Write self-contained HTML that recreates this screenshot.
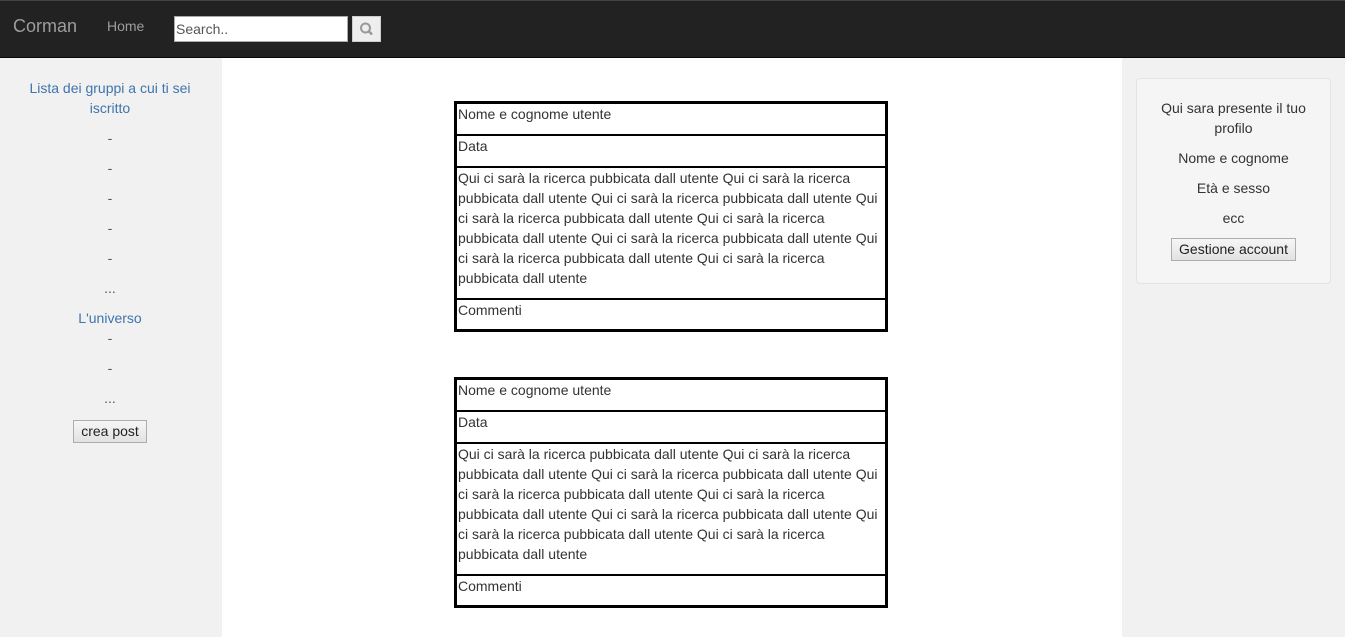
<!DOCTYPE html>
<html><head><meta charset="utf-8"><style>
*{box-sizing:border-box;margin:0;padding:0}
body{width:1345px;height:637px;overflow:hidden;font-family:"Liberation Sans",Arial,sans-serif;font-size:14px;color:#333;background:#fff;position:relative}
.nav{position:absolute;left:0;top:0;width:1345px;height:58px;background:#222;border-bottom:1px solid #080808;border-top:1px solid #444}
.brand{position:absolute;left:13px;top:15px;font-size:18px;color:#9d9d9d}
.home{position:absolute;left:107px;top:17px;color:#9d9d9d;font-size:14px}
.search{position:absolute;left:174px;top:15px;width:174px;height:26px;background:#fff;border:1px solid #aaa;font-size:14px;color:#555;padding:4px 1px}
.sbtn{position:absolute;left:352px;top:15px;width:29px;height:26px;background:#eee;border:1px solid #ccc}
.left{position:absolute;left:0;top:58px;width:222px;height:579px;background:#f1f1f1;text-align:center}
.right{position:absolute;left:1122px;top:58px;width:223px;height:579px;background:#f1f1f1}
.l{position:absolute;left:0;width:220px;text-align:center;line-height:20px;color:#555}
.blue{color:#3f74ad}
.btn{display:inline-block;border:1px solid #adadad;background:linear-gradient(#f6f6f6,#e2e2e2);font-size:14px;color:#222;padding:2px 7px;line-height:17px}
.card{position:absolute;left:1136px;top:78px;width:195px;height:206px;background:#f5f5f5;border:1px solid #e3e3e3;border-radius:4px}
.r{position:absolute;left:0;width:193px;text-align:center;line-height:20px}
.post{position:absolute;left:454px;width:434px;border:3px solid #000;line-height:20px}
.post div{padding:0 0 0 1px;border-top:2px solid #000}
.post div:first-child{border-top:none;padding-top:0}
</style></head><body>
<div class="nav">
<div class="brand">Corman</div>
<div class="home">Home</div>
<div class="search">Search..</div>
<div class="sbtn"><svg width="27" height="24" viewBox="0 0 27 24"><circle cx="12.5" cy="11" r="4.5" fill="none" stroke="#999" stroke-width="2"/><line x1="16" y1="14.5" x2="19" y2="17.5" stroke="#999" stroke-width="2.5"/></svg></div>
</div>
<div class="left">
<div class="l blue" style="top:20px;padding:0 20px">Lista dei gruppi a cui ti sei iscritto</div>
<div class="l" style="top:70px">-</div>
<div class="l" style="top:100px">-</div>
<div class="l" style="top:130px">-</div>
<div class="l" style="top:160px">-</div>
<div class="l" style="top:190px">-</div>
<div class="l" style="top:220px">...</div>
<div class="l blue" style="top:250px">L'universo</div>
<div class="l" style="top:270px">-</div>
<div class="l" style="top:300px">-</div>
<div class="l" style="top:330px">...</div>
<div class="l" style="top:362px"><span class="btn">crea post</span></div>
</div>
<div class="right"></div>
<div class="card">
<div class="r" style="top:19px;padding:0 18px">Qui sara presente il tuo profilo</div>
<div class="r" style="top:69px">Nome e cognome</div>
<div class="r" style="top:99px">Età e sesso</div>
<div class="r" style="top:129px">ecc</div>
<div class="r" style="top:159px"><span class="btn">Gestione account</span></div>
</div>
<div class="post" style="top:101px">
<div style="height:30px">Nome e cognome utente</div>
<div style="height:32px">Data</div>
<div style="height:132px">Qui ci sarà la ricerca pubbicata dall utente Qui ci sarà la ricerca pubbicata dall utente Qui ci sarà la ricerca pubbicata dall utente Qui ci sarà la ricerca pubbicata dall utente Qui ci sarà la ricerca pubbicata dall utente Qui ci sarà la ricerca pubbicata dall utente Qui ci sarà la ricerca pubbicata dall utente Qui ci sarà la ricerca pubbicata dall utente</div>
<div style="height:31px">Commenti</div>
</div>
<div class="post" style="top:377px">
<div style="height:30px">Nome e cognome utente</div>
<div style="height:32px">Data</div>
<div style="height:132px">Qui ci sarà la ricerca pubbicata dall utente Qui ci sarà la ricerca pubbicata dall utente Qui ci sarà la ricerca pubbicata dall utente Qui ci sarà la ricerca pubbicata dall utente Qui ci sarà la ricerca pubbicata dall utente Qui ci sarà la ricerca pubbicata dall utente Qui ci sarà la ricerca pubbicata dall utente Qui ci sarà la ricerca pubbicata dall utente</div>
<div style="height:31px">Commenti</div>
</div>
</body></html>
